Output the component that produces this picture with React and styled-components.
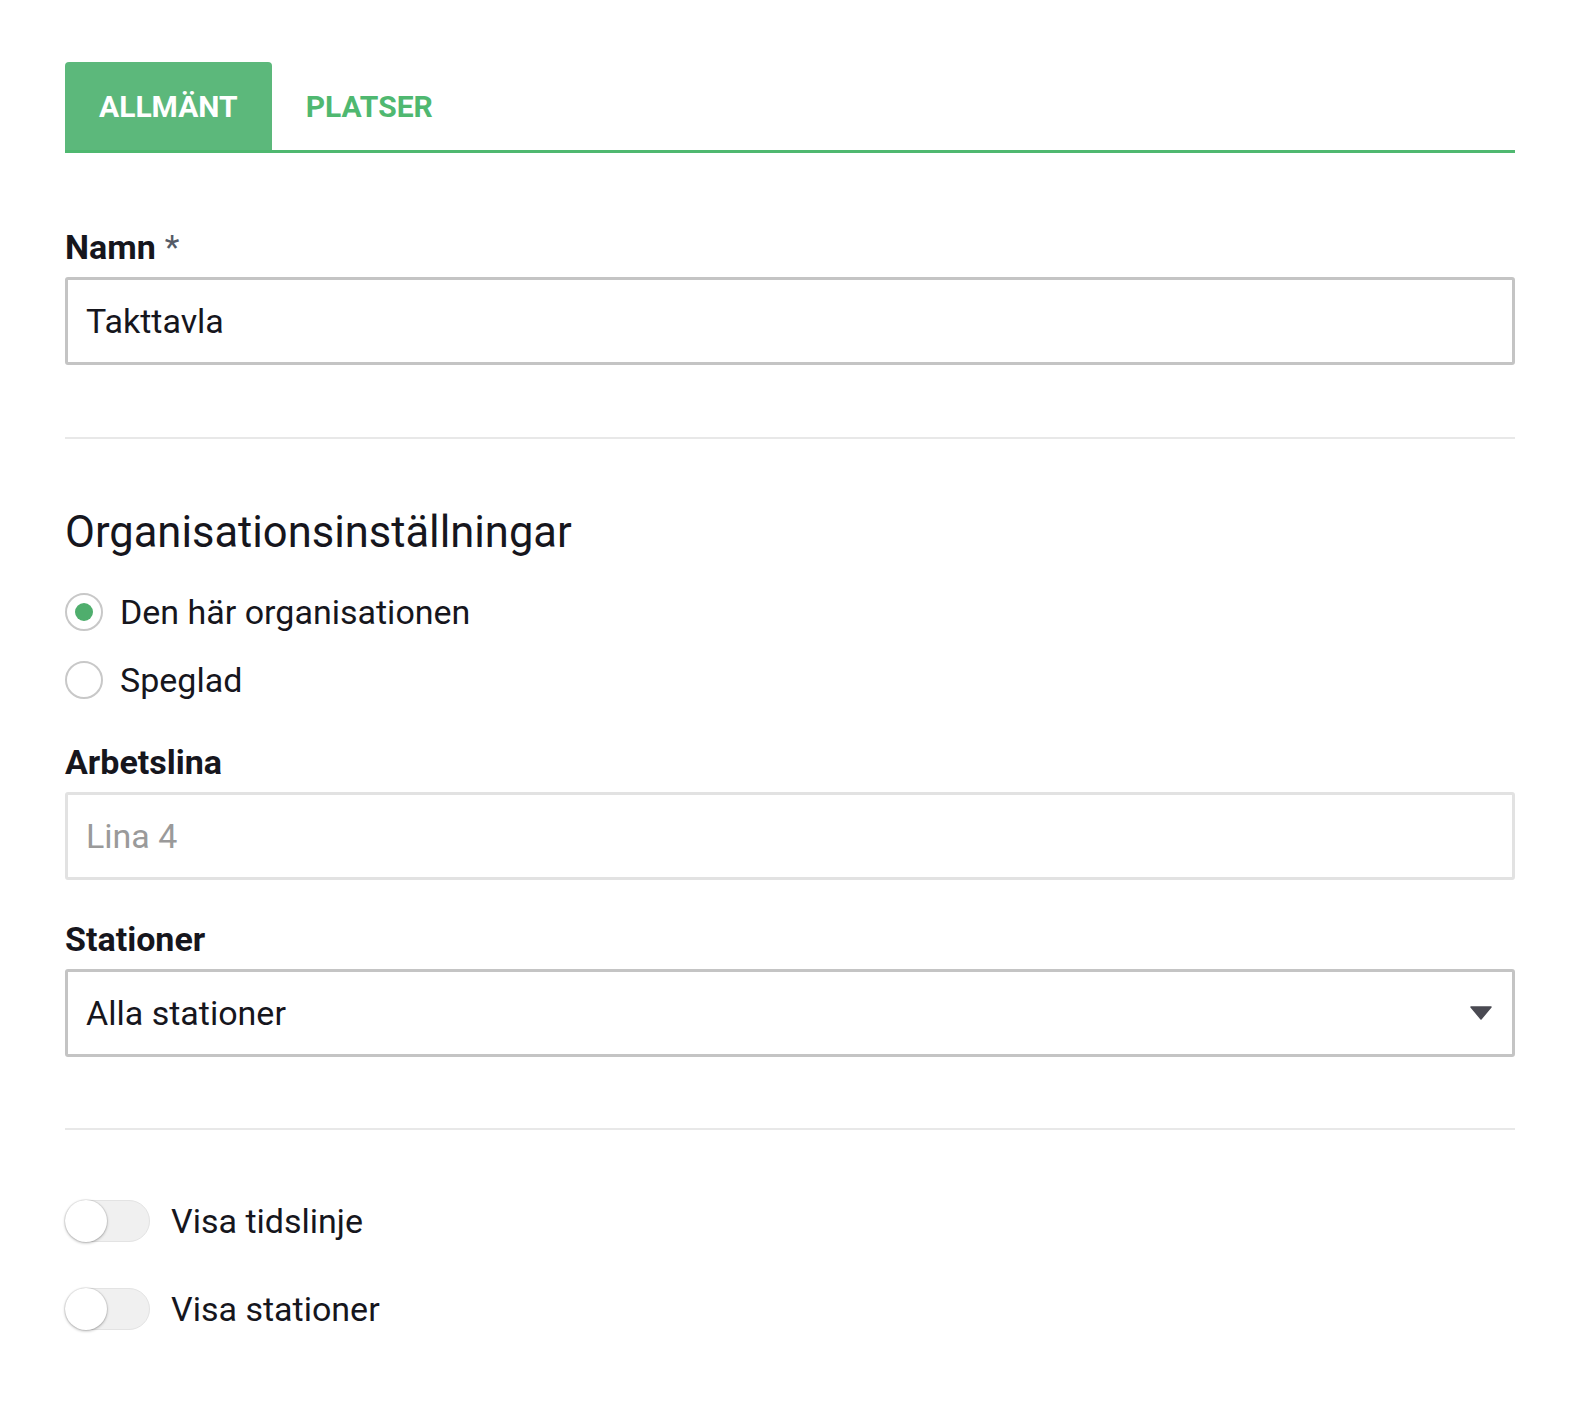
import React from "react";
import styled, { createGlobalStyle } from "styled-components";

const Global = createGlobalStyle`
  html, body { margin: 0; padding: 0; background: #fff; }
  body { font-family: Roboto, "Noto Sans", "Liberation Sans", sans-serif; color: #16161d; }
  * { box-sizing: border-box; }
`;

const Page = styled.div`
  margin: 0 65px;
  padding: 62px 0 30px;
`;

const TabBar = styled.div`
  display: flex;
  align-items: stretch;
  height: 91px;
  border-bottom: 3px solid #4fb870;
`;

const Tab = styled.div`
  display: flex;
  align-items: center;
  justify-content: center;
  padding: 0 34px;
  font-size: 30px;
  font-weight: 700;
  text-transform: uppercase;
  border-radius: 4px 4px 0 0;
  background: ${(p) => (p.$active ? "#5cb87b" : "transparent")};
  color: ${(p) => (p.$active ? "#fff" : "#4fb870")};
`;

const Field = styled.div`
  display: flex;
  flex-direction: column;
  margin-top: ${(p) => p.$mt || 0}px;
`;

const Label = styled.label`
  font-size: 34px;
  font-weight: 700;
  line-height: 36px;
  margin-bottom: 12px;
  color: #16161d;
`;

const Req = styled.span`
  font-weight: 400;
  color: #555b66;
  margin-left: 9px;
`;

const Input = styled.div`
  height: 88px;
  display: flex;
  align-items: center;
  padding: 0 18px;
  border: 3px solid ${(p) => (p.$disabled ? "#e2e2e2" : "#c4c4c4")};
  border-radius: 3px;
  font-size: 34px;
  color: ${(p) => (p.$disabled ? "#9a9a9a" : "#16161d")};
  background: #fff;
`;

const SelectBox = styled(Input)`
  justify-content: space-between;
  padding-right: 20px;
`;

const Divider = styled.hr`
  border: 0;
  height: 2px;
  background: #e8e8e8;
  margin: ${(p) => p.$m};
`;

const Heading = styled.h2`
  margin: 0;
  font-size: 43.5px;
  font-weight: 400;
  line-height: 48px;
  color: #16161d;
`;

const RadioGroup = styled.div`
  display: flex;
  flex-direction: column;
  gap: 30px;
  margin-top: 36px;
`;

const RadioRow = styled.div`
  display: flex;
  align-items: center;
  gap: 17px;
  font-size: 34px;
  line-height: 38px;
`;

const RadioCircle = styled.span`
  width: 38px;
  height: 38px;
  border-radius: 50%;
  border: 2.5px solid #c8c8c8;
  display: flex;
  align-items: center;
  justify-content: center;
  flex: none;
  &::after {
    content: "";
    width: 18px;
    height: 18px;
    border-radius: 50%;
    background: ${(p) => (p.$checked ? "#4fae6d" : "transparent")};
  }
`;

const Toggles = styled.div`
  display: flex;
  flex-direction: column;
  gap: 46px;
`;

const ToggleRow = styled.div`
  display: flex;
  align-items: center;
  gap: 21px;
  font-size: 34px;
`;

const Track = styled.span`
  position: relative;
  width: 85px;
  height: 42px;
  border-radius: 21px;
  background: #f0f0f0;
  border: 1px solid #e3e3e3;
  flex: none;
`;

const Knob = styled.span`
  position: absolute;
  left: -1px;
  top: -1px;
  width: 42px;
  height: 42px;
  border-radius: 50%;
  background: #fff;
  box-shadow: 0 1px 3px rgba(0, 0, 0, 0.3), 0 0 0 1px rgba(0, 0, 0, 0.06);
`;

const Caret = () => (
  <svg width="22" height="14" viewBox="0 0 22 14">
    <path d="M1 1 H21 L11 13 Z" fill="#4a4a52" stroke="#4a4a52" strokeWidth="1.5" strokeLinejoin="round" />
  </svg>
);

export default function App() {
  return (
    <>
      <Global />
      <Page>
        <TabBar>
          <Tab $active>Allmänt</Tab>
          <Tab>Platser</Tab>
        </TabBar>

        <Field $mt={76}>
          <Label>
            Namn<Req>*</Req>
          </Label>
          <Input>Takttavla</Input>
        </Field>

        <Divider $m="72px 0 70px" />

        <Heading>Organisationsinställningar</Heading>
        <RadioGroup>
          <RadioRow>
            <RadioCircle $checked />
            Den här organisationen
          </RadioRow>
          <RadioRow>
            <RadioCircle />
            Speglad
          </RadioRow>
        </RadioGroup>

        <Field $mt={45}>
          <Label>Arbetslina</Label>
          <Input $disabled>Lina 4</Input>
        </Field>

        <Field $mt={41}>
          <Label>Stationer</Label>
          <SelectBox>
            Alla stationer
            <Caret />
          </SelectBox>
        </Field>

        <Divider $m="71px 0 70px" />

        <Toggles>
          <ToggleRow>
            <Track>
              <Knob />
            </Track>
            Visa tidslinje
          </ToggleRow>
          <ToggleRow>
            <Track>
              <Knob />
            </Track>
            Visa stationer
          </ToggleRow>
        </Toggles>
      </Page>
    </>
  );
}
